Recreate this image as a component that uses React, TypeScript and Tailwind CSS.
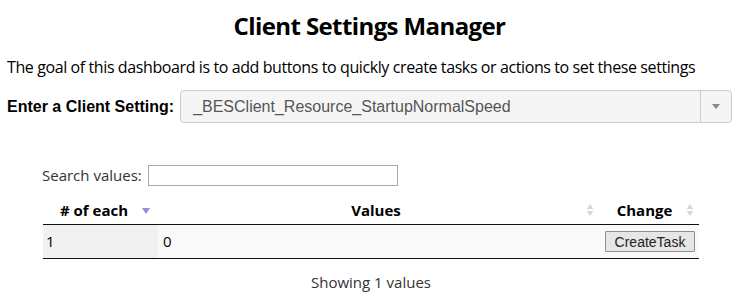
import React from "react";

const SortBoth = () => (
  <svg width="8" height="16" viewBox="0 0 8 16" className="shrink-0">
    <path d="M4 2 L7.5 7 L0.5 7 Z" fill="#d8d8d8" />
    <path d="M4 14 L7.5 9 L0.5 9 Z" fill="#d8d8d8" />
  </svg>
);

const SortDesc = () => (
  <svg width="10" height="16" viewBox="0 0 10 16" className="shrink-0">
    <path d="M1 6 L9 6 L5 12 Z" fill="#8f8fd6" />
  </svg>
);

export default function App() {
  return (
    <div className="w-[739px] h-[301px] bg-white text-black overflow-hidden" style={{ fontFamily: '"Open Sans", sans-serif' }}>
      <h1 className="text-center font-bold text-[24px] leading-[30px] pt-[11px] tracking-[-0.6px]">Client Settings Manager</h1>
      <p className="mt-[15px] ml-[7px] text-[16px] leading-[22px] tracking-[-0.4px]">
        The goal of this dashboard is to add buttons to quickly create tasks or actions to set these settings
      </p>
      <div className="flex items-center mt-[12px] ml-[7px]" style={{ fontFamily: '"Liberation Sans", Arial, sans-serif' }}>
        <span className="font-bold text-[16px]">Enter a Client Setting:</span>
        <div className="ml-[6px] w-[552px] h-[33px] border border-[#cccccc] rounded-[4px] bg-[#f5f5f5] flex items-center">
          <span className="flex-1 pl-[12px] text-[16px] text-[#555555]">_BESClient_Resource_StartupNormalSpeed</span>
          <div className="w-[31px] h-full border-l border-[#cccccc] flex items-center justify-center">
            <svg width="8" height="5" viewBox="0 0 8 5"><path d="M0 0 L8 0 L4 5 Z" fill="#888888" /></svg>
          </div>
        </div>
      </div>
      <div className="ml-[43px] w-[656px] mt-[41px]">
        <div className="flex items-center text-[15px] text-[#333333] h-[22px]">
          <span className="ml-[-1px]">Search values:</span>
          <input className="ml-[6px] w-[250px] h-[21px] border border-[#a9a9a9] bg-white outline-none" />
        </div>
        <table className="w-full mt-[10px] border-collapse text-[15px]">
          <thead>
            <tr className="border-b border-[#111111]">
              <th className="w-[115px] h-[28px] pl-[17px] pr-[7px] text-left font-bold">
                <div className="flex items-center justify-between"><span># of each</span><SortDesc /></div>
              </th>
              <th className="font-bold pr-[5px]">
                <div className="flex items-center justify-between"><span className="flex-1 text-center pl-[8px]">Values</span><SortBoth /></div>
              </th>
              <th className="w-[100px] font-bold pr-[5px]">
                <div className="flex items-center justify-between"><span className="flex-1 text-center pl-[4px]">Change</span><SortBoth /></div>
              </th>
            </tr>
          </thead>
          <tbody>
            <tr className="border-b border-[#111111] h-[34px]">
              <td className="bg-[#f1f1f1] pl-[3px]">1</td>
              <td className="bg-[#f9f9f9] pl-[5px]">0</td>
              <td className="bg-[#f9f9f9] text-right pr-[4px]">
                <button className="h-[21px] w-[90px] border border-[#8f8f8f] bg-[#e6e6e6] rounded-[1px] text-[14px] text-[#222222]" style={{ fontFamily: '"Liberation Sans", Arial, sans-serif' }}>CreateTask</button>
              </td>
            </tr>
          </tbody>
        </table>
        <div className="text-center mt-[12px] text-[15px] text-[#333333]">Showing 1 values</div>
      </div>
    </div>
  );
}
